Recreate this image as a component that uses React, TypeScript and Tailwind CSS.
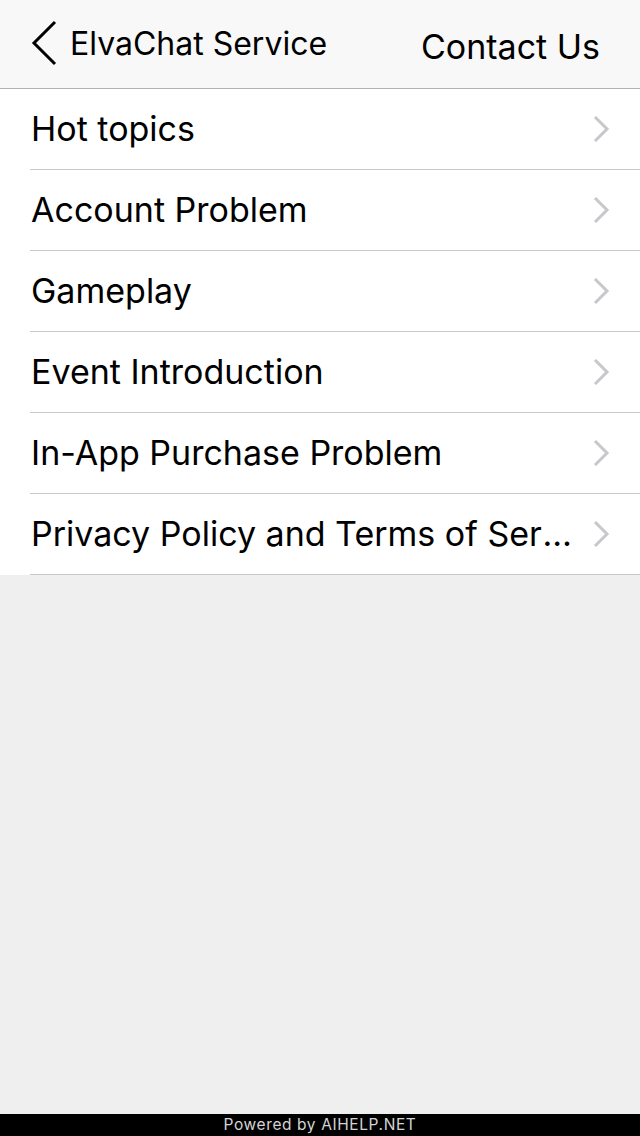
const topics = [
  'Hot topics',
  'Account Problem',
  'Gameplay',
  'Event Introduction',
  'In-App Purchase Problem',
  'Privacy Policy and Terms of Service',
]

export default function App() {
  return (
    <div
      className="flex h-[1136px] w-[640px] flex-col bg-[#efeff0] text-black"
      style={{ fontFamily: 'Inter, "Liberation Sans", sans-serif' }}
    >
      {/* Nav bar */}
      <div className="flex h-[89px] shrink-0 items-center border-b border-[#b2b2b2] bg-[#f8f8f8] pl-[31px] pr-[40px]">
        <svg width="27" height="46" viewBox="0 0 27 46" className="mb-[2px] shrink-0">
          <path d="M24 2 L3 23 L24 44" fill="none" stroke="#000" strokeWidth="3" />
        </svg>
        <span className="ml-[12px] text-[32px] leading-none">ElvaChat Service</span>
        <span className="ml-auto mt-[6px] text-[34px] leading-none">Contact Us</span>
      </div>

      {/* Topic list */}
      <ul className="bg-white">
        {topics.map((t) => (
          <li key={t} className="ml-[30px] flex h-[81px] items-center border-b border-[#c8c7cc] pr-[29px]">
            <span className="min-w-0 flex-1 truncate pl-[1px] pr-[12px] text-[34px] leading-[1.2]">{t}</span>
            <svg width="18" height="28" viewBox="0 0 18 28" className="shrink-0">
              <path d="M2 2 L14 14 L2 26" fill="none" stroke="#c7c7cc" strokeWidth="3" />
            </svg>
          </li>
        ))}
      </ul>

      <div className="flex-1" />

      {/* Footer */}
      <div className="flex h-[22px] shrink-0 items-center justify-center bg-black text-[15.5px] leading-none tracking-[0.6px] text-[#d4d4d4]">
        Powered by AIHELP.NET
      </div>
    </div>
  )
}
